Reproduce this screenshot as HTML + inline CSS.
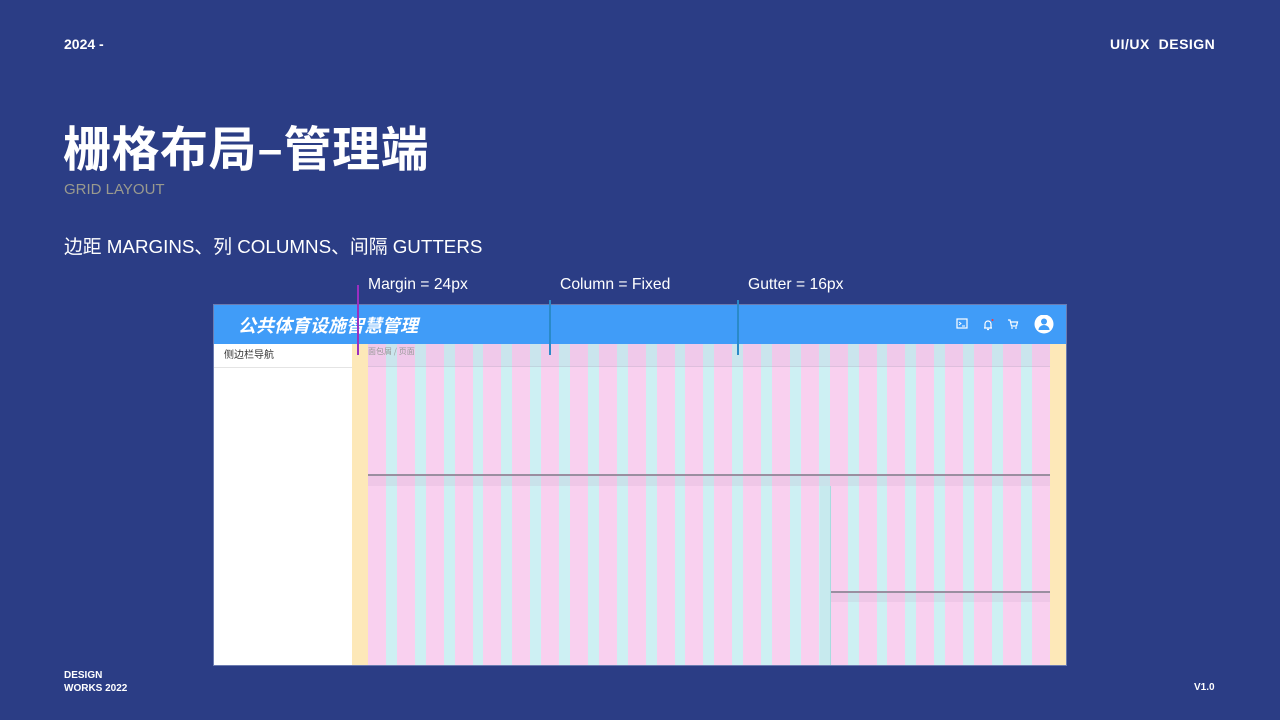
<!DOCTYPE html>
<html><head><meta charset="utf-8"><style>
*{margin:0;padding:0;box-sizing:border-box}
body{width:1280px;height:720px;background:#2b3d85;position:relative;overflow:hidden;font-family:"Liberation Sans","Noto Sans CJK SC",sans-serif;color:#fff}
.a{position:absolute}
.cols{position:absolute;left:368px;top:344px;width:682px;height:321px;background:#cdf0f3;display:flex;justify-content:space-between}
.cols div{width:18px;background:#f9d0ef}
</style></head><body>
<div class="a" style="left:64px;top:36px;font-size:14px;font-weight:bold">2024 -</div>
<div class="a" style="left:1110px;top:36px;font-size:14px;font-weight:bold;letter-spacing:0.5px">UI/UX&nbsp; DESIGN</div>
<div class="a" style="left:63px;top:116px;font-size:48px;font-weight:bold;font-family:'Noto Sans CJK SC',sans-serif;line-height:58px;letter-spacing:0.5px">栅格布局–管理端</div>
<div class="a" style="left:64px;top:181px;font-size:15px;color:#9a9a8e">GRID LAYOUT</div>
<div class="a" style="left:64px;top:232px;font-size:18.8px;font-family:'Liberation Sans','Noto Sans CJK SC',sans-serif">边距 MARGINS、列 COLUMNS、间隔 GUTTERS</div>
<div class="a" style="left:368px;top:276px;font-size:15.7px">Margin = 24px</div>
<div class="a" style="left:560px;top:276px;font-size:15.7px">Column = Fixed</div>
<div class="a" style="left:748px;top:276px;font-size:15.7px">Gutter = 16px</div>
<div class="a" style="left:64px;top:669px;font-size:10px;font-weight:bold;line-height:13px">DESIGN<br>WORKS 2022</div>
<div class="a" style="left:1194px;top:682px;font-size:10px;font-weight:bold">V1.0</div>

<div class="a" style="left:213px;top:304px;width:854px;height:362px;background:#fff;border:1px solid #6b7bb0"></div>
<div class="a" style="left:214px;top:305px;width:852px;height:39px;background:#409cf8"></div>
<div class="a" style="left:238px;top:312px;font-size:18px;font-weight:bold;font-style:italic;font-family:'Noto Sans CJK SC',sans-serif">公共体育设施智慧管理</div>
<svg class="a" style="left:955px;top:315px" width="100" height="20" viewBox="0 0 100 20">
<rect x="2" y="4" width="10" height="9" fill="none" stroke="#fff" stroke-width="1.2"/><path d="M4 7l2 1.5-2 1.5M7 11h3" stroke="#fff" fill="none" stroke-width="0.9"/>
<path d="M29 13h8M30 13v-4a3 3 0 0 1 6 0v4M32 14.5h2" stroke="#fff" fill="none" stroke-width="1.2"/><circle cx="37.5" cy="5" r="1" fill="#f33"/>
<path d="M53 5h2l1.5 6h5l1-4h-7" stroke="#fff" fill="none" stroke-width="1.2"/><circle cx="57" cy="13" r="0.9" fill="#fff"/><circle cx="61" cy="13" r="0.9" fill="#fff"/>
<circle cx="89" cy="9" r="9.5" fill="#fff"/><circle cx="89" cy="6.5" r="3" fill="#409cf8"/><path d="M83.5 15a5.5 5 0 0 1 11 0z" fill="#409cf8"/>
</svg>
<div class="a" style="left:224px;top:346px;font-size:10px;color:#333;font-family:'Noto Sans CJK SC',sans-serif">侧边栏导航</div>
<div class="a" style="left:214px;top:367px;width:138px;height:1px;background:#e4e4e4"></div>
<div class="a" style="left:352px;top:344px;width:16px;height:321px;background:#fde8b8"></div>
<div class="a" style="left:1050px;top:344px;width:16px;height:321px;background:#fde8b8"></div>
<div class="cols"><div></div><div></div><div></div><div></div><div></div><div></div><div></div><div></div><div></div><div></div><div></div><div></div><div></div><div></div><div></div><div></div><div></div><div></div><div></div><div></div><div></div><div></div><div></div><div></div></div>
<div class="a" style="left:368px;top:344px;width:682px;height:23px;background:rgba(180,160,200,0.12);border-bottom:1px solid rgba(150,150,170,0.2)"></div>
<div class="a" style="left:368px;top:346px;font-size:8px;color:#999;font-family:'Noto Sans CJK SC',sans-serif">面包屑 / 页面</div>
<div class="a" style="left:368px;top:474px;width:682px;height:2px;background:#9a8ea0"></div>
<div class="a" style="left:368px;top:476px;width:682px;height:10px;background:rgba(180,150,190,0.15)"></div>
<div class="a" style="left:820px;top:486px;width:11px;height:179px;background:#c7eaee;border-right:1px solid #a8dcdf"></div>
<div class="a" style="left:831px;top:591px;width:219px;height:2px;background:#9a8ea0"></div>
<div class="a" style="left:831px;top:593px;width:219px;height:9px;background:rgba(180,150,190,0.15)"></div>
<div class="a" style="left:357px;top:285px;width:1.5px;height:70px;background:#9b2fc0"></div>
<div class="a" style="left:549px;top:300px;width:1.5px;height:55px;background:#2a8ac8"></div>
<div class="a" style="left:737px;top:300px;width:1.5px;height:55px;background:#2a8ac8"></div>
</body></html>
